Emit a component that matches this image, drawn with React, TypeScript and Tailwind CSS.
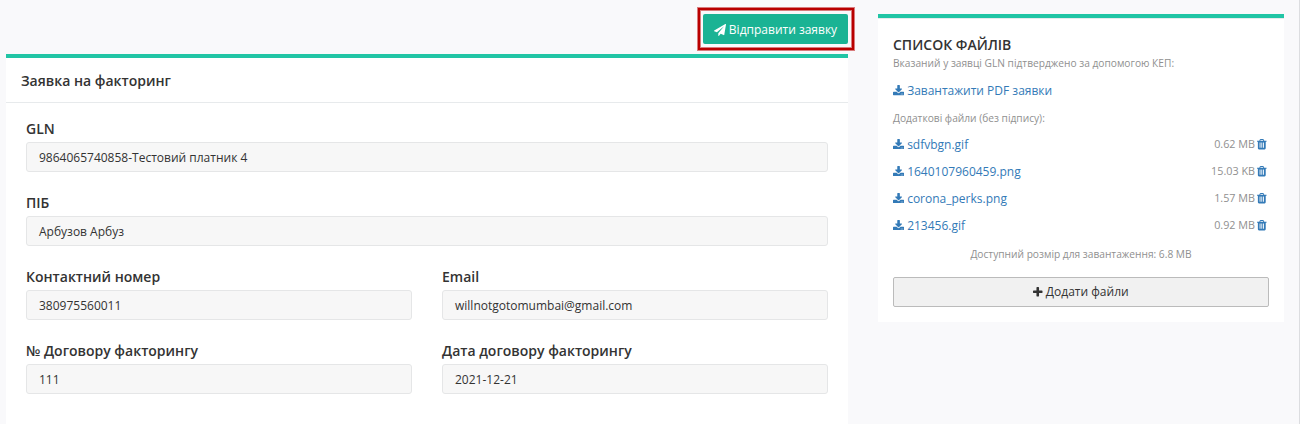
import React from 'react';

const icons = {
  plane: {
    box: '0 0 1792 1792',
    size: 'h-3 w-3',
    d: 'M1764 11q33 24 27 64l-256 1536q-5 29-32 45-14 8-31 8-11 0-24-5l-453-185-242 295q-18 23-49 23-13 0-22-4-19-7-30.5-23.5t-11.5-36.5v-349l864-1059-1069 925-395-162q-37-14-40-55-2-40 32-59l1664-960q15-9 32-9 20 0 36 11z',
  },
  download: {
    box: '64 0 1664 1536',
    size: '-mt-px h-[10.3px] w-[11.15px]',
    d: 'M1344 1344q0-26-19-45t-45-19-45 19-19 45 19 45 45 19 45-19 19-45zm256 0q0-26-19-45t-45-19-45 19-19 45 19 45 45 19 45-19 19-45zm128-224v320q0 40-28 68t-68 28h-1472q-40 0-68-28t-28-68v-320q0-40 28-68t68-28h465l135 136q58 56 136 56t136-56l136-136h464q40 0 68 28t28 68zm-325-569q17 41-14 70l-448 448q-18 19-45 19t-45-19l-448-448q-31-29-14-70 17-39 59-39h256v-448q0-26 19-45t45-19h256q26 0 45 19t19 45v448h256q42 0 59 39z',
  },
  plus: {
    box: '192 128 1408 1408',
    size: 'h-[9.5px] w-[9.5px]',
    d: 'M1600 736v192q0 40-28 68t-68 28h-416v416q0 40-28 68t-68 28h-192q-40 0-68-28t-28-68v-416h-416q-40 0-68-28t-28-68v-192q0-40 28-68t68-28h416v-416q0-40 28-68t68-28h192q40 0 68 28t28 68v416h416q40 0 68 28t28 68z',
  },
  trash: {
    box: '192 128 1408 1536',
    size: 'h-[10.5px] w-[9.6px]',
    d: 'M704 1376v-704q0-14-9-23t-23-9h-64q-14 0-23 9t-9 23v704q0 14 9 23t23 9h64q14 0 23-9t9-23zm256 0v-704q0-14-9-23t-23-9h-64q-14 0-23 9t-9 23v704q0 14 9 23t23 9h64q14 0 23-9t9-23zm256 0v-704q0-14-9-23t-23-9h-64q-14 0-23 9t-9 23v704q0 14 9 23t23 9h64q14 0 23-9t9-23zm-544-992h448l-48-117q-7-9-17-11h-317q-10 2-17 11zm928 32v64q0 14-9 23t-23 9h-96v948q0 83-47 143.5t-113 60.5h-832q-66 0-113-58.5t-47-141.5v-952h-96q-14 0-23-9t-9-23v-64q0-14 9-23t23-9h309l70-167q15-37 54-63t79-26h320q40 0 79 26t54 63l70 167h309q14 0 23 9t9 23z',
  },
};

function Icon({ name }: { name: keyof typeof icons }) {
  const icon = icons[name];
  return (
    <svg viewBox={icon.box} className={`${icon.size} shrink-0`} fill="currentColor" aria-hidden="true">
      <path d={icon.d} />
    </svg>
  );
}

function Field({ label, value }: { label: string; value: string }) {
  return (
    <div className="mb-[15px] h-[59px] min-w-0 flex-1">
      <div className="h-[28px] pt-[5px] text-[14px] leading-[20px] font-semibold">{label}</div>
      <div className="h-[30px] rounded-[3px] border border-[#e5e6e7] bg-[#f7f7f7] px-3 pt-px text-[12px] leading-[28px]">{value}</div>
    </div>
  );
}

const files = [
  ['sdfvbgn.gif', '0.62 MB'],
  ['1640107960459.png', '15.03 KB'],
  ['corona_perks.png', '1.57 MB'],
  ['213456.gif', '0.92 MB'],
];

export default function App() {
  return (
    <div className="flex h-[424px] w-[1300px] items-start overflow-hidden border-r border-[#dcdde0] bg-[#f9f9fb] pl-[6px] font-['Open_Sans',sans-serif] text-[#333]">
      <main className="w-[842px] shrink-0">
        <div className="flex h-[54px] justify-end pt-[14px]">
          <button className="relative flex h-[30px] w-[145px] items-center justify-center gap-[3px] rounded-[2px] bg-[#1ab394] pt-px text-[12px] text-white">
            <Icon name="plane" />Відправити заявку
            <span className="absolute -top-1.5 -right-1.5 -bottom-1.5 -left-[5px] border-2 border-[#b90000] shadow-[0_0_0_1px_rgba(185,0,0,0.5),inset_0_0_0_1px_rgba(185,0,0,0.5)]" />
          </button>
        </div>
        <section className="h-[370px] border-t-4 border-[#21c5a5] bg-white">
          <h1 className="h-[45px] border-b border-[#e7eaec] px-[15px] pt-[13px] text-[14px] leading-[20px] font-semibold">Заявка на факторинг</h1>
          <div className="px-5 pt-[11px]">
            <Field label="GLN" value="9864065740858-Тестовий платник 4" />
            <Field label="ПІБ" value="Арбузов Арбуз" />
            <div className="flex gap-[30px]"><Field label="Контактний номер" value="380975560011" /><Field label="Email" value="willnotgotomumbai@gmail.com" /></div>
            <div className="flex gap-[30px]"><Field label="№ Договору факторингу" value="111" /><Field label="Дата договору факторингу" value="2021-12-21" /></div>
          </div>
        </section>
      </main>
      <aside className="mt-[14px] ml-[30px] h-[308px] w-[406px] shrink-0 border-t-4 border-[#21c5a5] bg-white">
        <div className="border-t border-[#e7eaec] px-[15px] pt-[16px]">
          <h2 className="text-[14px] leading-[20px] font-semibold">СПИСОК ФАЙЛІВ</h2>
          <p className="text-[10.2px] leading-[16px] text-[#909090]">Вказаний у заявці GLN підтверджено за допомогою КЕП:</p>
          <a className="mt-[10px] flex h-5 items-center gap-[3px] text-[12px] text-[#337ab7]"><Icon name="download" />Завантажити PDF заявки</a>
          <p className="mt-[9px] mb-[5px] text-[10.2px] leading-[16px] text-[#909090]">Додаткові файли (без підпису):</p>
          {files.map(([n, s]) => (
            <div key={n} className="flex h-[27px] items-center justify-between pr-[2px]">
              <a className="flex items-center gap-[3px] text-[12px] text-[#337ab7]"><Icon name="download" />{n}</a>
              <span className="flex items-center gap-[2.4px] text-[10.8px] text-[#909090]">{s}<span className="text-[#337ab7]"><Icon name="trash" /></span></span>
            </div>
          ))}
          <p className="mt-[7px] text-center text-[10.2px] leading-[16px] text-[#909090]">Доступний розмір для завантаження: 6.8 MB</p>
          <button className="mt-[15px] flex h-[30px] w-full items-center justify-center gap-[3px] rounded-[2px] border border-[#bbb] bg-[#f1f1f1] text-[12px]"><Icon name="plus" />Додати файли</button>
        </div>
      </aside>
    </div>
  );
}
